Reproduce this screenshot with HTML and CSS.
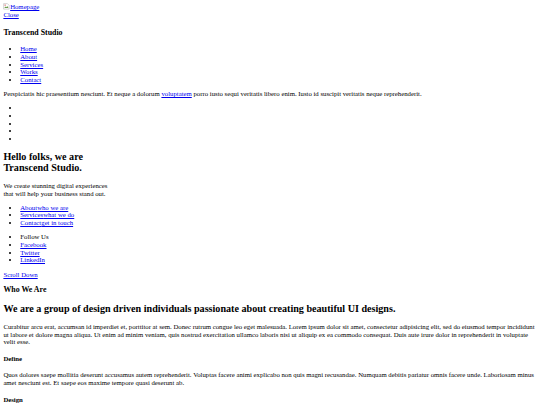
FILE: index.html
```html
<!DOCTYPE html>
<html lang="en">
<head>
	<meta charset="utf-8">
	<title>Transcend Studio</title>
	<meta name="viewport" content="width=device-width, initial-scale=1">
	<link rel="stylesheet" href="styles.css">
</head>
<body>
	<header class="site-header">
		<div class="logo">
			<a href="#"><span class="broken-img"><svg width="16" height="16" viewBox="0 0 16 16"><path d="M1.5 1.5h9l4 4v9h-13z" fill="#fff" stroke="#999"/><path d="M3 12l3-4 2 2 2-3 3 5z" fill="#6a9c4a"/><circle cx="5" cy="5" r="1.5" fill="#c33"/></svg></span>Homepage</a>
		</div>
		<div class="close"><a href="#">Close</a></div>

		<h3>Transcend Studio</h3>
		<ul class="nav">
			<li><a href="#">Home</a></li>
			<li><a href="#">About</a></li>
			<li><a href="#">Services</a></li>
			<li><a href="#">Works</a></li>
			<li><a href="#">Contact</a></li>
		</ul>
		<p>Perspiciatis hic praesentium nesciunt. Et neque a dolorum <a href="#">voluptatem</a> porro iusto sequi veritatis libero enim. Iusto id suscipit veritatis neque reprehenderit.</p>
		<ul class="socials">
			<li></li>
			<li></li>
			<li></li>
			<li></li>
			<li></li>
		</ul>
	</header>

	<section class="hero">
		<h2>Hello folks, we are<br>Transcend Studio.</h2>
		<p>We create stunning digital experiences<br>that will help your business stand out.</p>
		<ul class="hero-links">
			<li><a href="#">About<span>who we are</span></a></li>
			<li><a href="#">Services<span>what we do</span></a></li>
			<li><a href="#">Contact<span>get in touch</span></a></li>
		</ul>
		<ul class="follow">
			<li>Follow Us</li>
			<li><a href="#">Facebook</a></li>
			<li><a href="#">Twitter</a></li>
			<li><a href="#">LinkedIn</a></li>
		</ul>
		<a href="#about">Scroll Down</a>
	</section>

	<section class="about" id="about">
		<h3>Who We Are</h3>
		<h2>We are a group of design driven individuals passionate about creating beautiful UI designs.</h2>
		<p>Curabitur arcu erat, accumsan id imperdiet et, porttitor at sem. Donec rutrum congue leo eget malesuada. Lorem ipsum dolor sit amet, consectetur adipisicing elit, sed do eiusmod tempor incididunt ut labore et dolore magna aliqua. Ut enim ad minim veniam, quis nostrud exercitation ullamco laboris nisi ut aliquip ex ea commodo consequat. Duis aute irure dolor in reprehenderit in voluptate velit esse.</p>

		<h4>Define</h4>
		<p>Quos dolores saepe mollitia deserunt accusamus autem reprehenderit. Voluptas facere animi explicabo non quis magni recusandae. Numquam debitis pariatur omnis facere unde. Laboriosam minus amet nesciunt est. Et saepe eos maxime tempore quasi deserunt ab.</p>

		<h4>Design</h4>
		<p>Odit voluptatem dolor ratione, placeat quaerat commodi. Maiores quos soluta facere dicta, ipsam beatae esse.</p>
	</section>
</body>
</html>
```

FILE: styles.css
```css
/* the page is drawn at a 1280px layout, scaled down to the window */
html {
	zoom: 0.421875;
	line-height: 1.125;
}

body {
	font-family: "Liberation Serif", "Times New Roman", serif;
	color: #000;
}

.broken-img svg {
	vertical-align: -2px;
}

.close {
	padding-bottom: 5px;
}
```
